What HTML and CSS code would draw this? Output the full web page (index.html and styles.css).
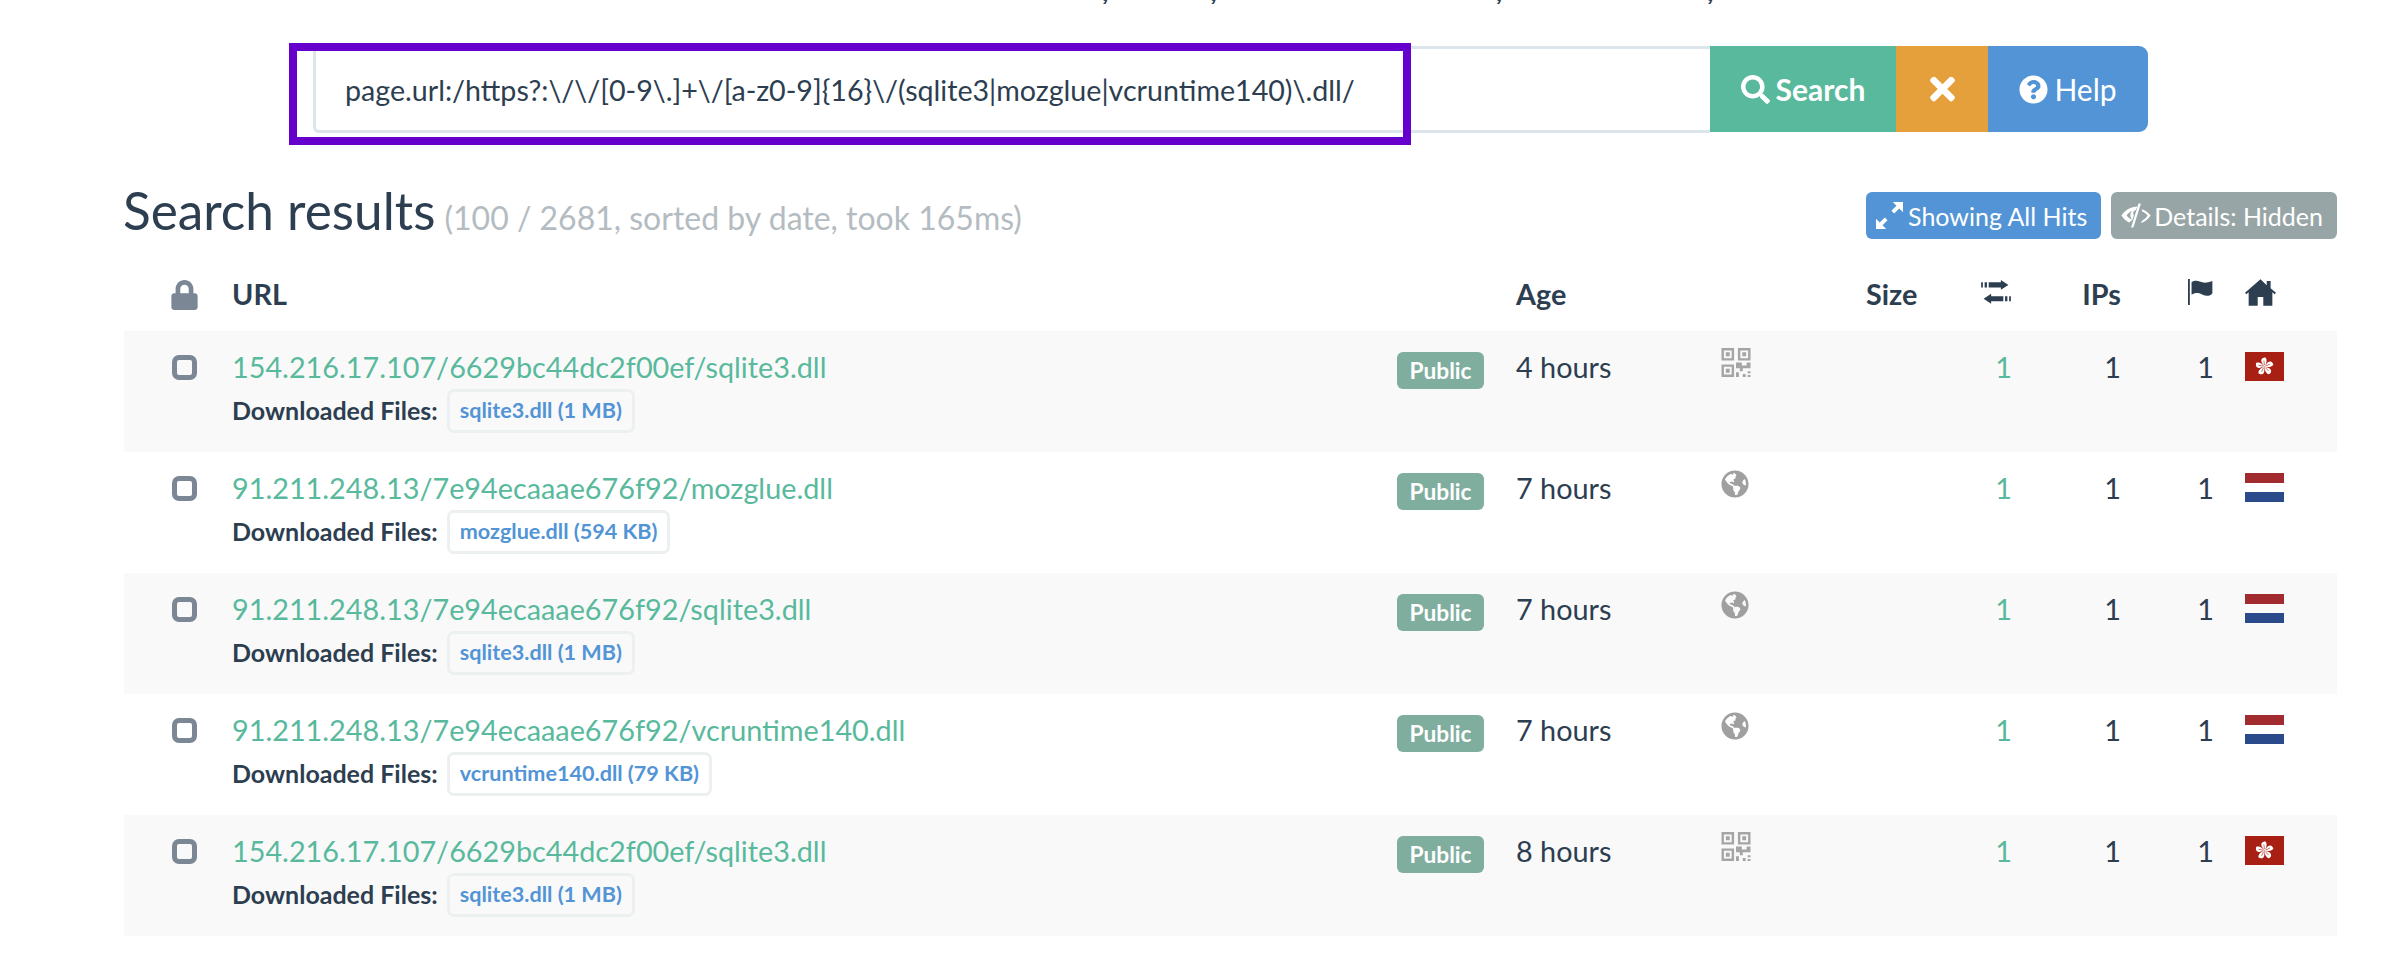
FILE: index.html
```html
<!DOCTYPE html>
<html lang="en">
<head>
<meta charset="utf-8">
<title>Search results</title>
<link rel="stylesheet" href="styles.css">
</head>
<body>
<svg class="defs" aria-hidden="true">
  <symbol id="i-search" viewBox="0 0 512 512"><path d="M505 442.7L405.3 343c-4.5-4.5-10.6-7-17-7H372c27.6-35.3 44-79.7 44-128C416 93.1 322.9 0 208 0S0 93.1 0 208s93.1 208 208 208c48.3 0 92.7-16.4 128-44v16.3c0 6.4 2.5 12.5 7 17l99.7 99.7c9.4 9.4 24.6 9.4 33.9 0l28.3-28.3c9.4-9.4 9.4-24.6.1-34zM208 336c-70.7 0-128-57.2-128-128 0-70.7 57.2-128 128-128 70.7 0 128 57.2 128 128 0 70.7-57.2 128-128 128z"/></symbol>
  <symbol id="i-times" viewBox="0 0 352 512"><path d="M242.72 256l100.07-100.07c12.28-12.28 12.28-32.19 0-44.48l-22.24-22.24c-12.28-12.28-32.19-12.28-44.48 0L176 189.28 75.93 89.21c-12.28-12.28-32.19-12.28-44.48 0L9.21 111.45c-12.28 12.28-12.28 32.19 0 44.48L109.28 256 9.21 356.07c-12.28 12.28-12.28 32.19 0 44.48l22.24 22.24c12.28 12.28 32.2 12.28 44.48 0L176 322.72l100.07 100.07c12.28 12.28 32.2 12.28 44.48 0l22.24-22.24c12.28-12.28 12.28-32.19 0-44.48L242.72 256z"/></symbol>
  <symbol id="i-help" viewBox="0 0 512 512"><path d="M504 256c0 136.997-111.043 248-248 248S8 392.997 8 256C8 119.083 119.043 8 256 8s248 111.083 248 248zM262.655 90c-54.497 0-89.255 22.957-116.549 63.758-3.536 5.286-2.353 12.415 2.715 16.258l34.699 26.31c5.205 3.947 12.621 3.008 16.665-2.122 17.864-22.658 30.113-35.797 57.303-35.797 20.429 0 45.698 13.148 45.698 32.958 0 14.976-12.363 22.667-32.534 33.976C247.128 238.528 216 254.941 216 296v4c0 6.627 5.373 12 12 12h56c6.627 0 12-5.373 12-12v-1.333c0-28.462 83.186-29.647 83.186-106.667 0-58.002-60.165-102-116.531-102zM256 338c-25.365 0-46 20.635-46 46 0 25.364 20.635 46 46 46s46-20.636 46-46c0-25.365-20.635-46-46-46z"/></symbol>
  <symbol id="i-expand" viewBox="0 0 448 448"><path d="M448 0v170l-62-62-84 84-46-46 84-84-62-62zM0 448V278l62 62 84-84 46 46-84 84 62 62z"/></symbol>
  <symbol id="i-eye" viewBox="0 0 640 512"><path fill-rule="evenodd" d="M352 66C210 66 90 140 10 256c36 58 92 116 166 150l70-60c-52-18-96-50-126-90 28-44 70-78 118-100-24 24-38 56-38 92 0 40 18 74 46 98l30-100c-14-14-18-34-14-54 6-24 26-42 50-46z"/><path d="M424 0l-50 0-160 512 50 0z"/><path d="M446 120c76 24 140 74 186 136-50 78-122 138-214 162l48-66c42-18 76-50 100-96-26-36-66-66-116-84z"/></symbol>
  <symbol id="i-lock" viewBox="0 0 448 512"><path d="M400 224h-24v-72C376 68.2 307.8 0 224 0S72 68.2 72 152v72H48c-26.5 0-48 21.5-48 48v192c0 26.5 21.5 48 48 48h352c26.5 0 48-21.5 48-48V272c0-26.5-21.5-48-48-48zm-104 0H152v-72c0-39.7 32.3-72 72-72s72 32.3 72 72v72z"/></symbol>
  <symbol id="i-exchange" viewBox="0 0 512 448"><path d="M340 40V0l130 85-130 85v-40H130V40zM60 40h40v90H60zM0 40h30v90H0zM172 278v-40L42 323l130 85v-40h210v-90zM412 278h40v90h-40zM482 278h30v90h-30z"/></symbol>
  <symbol id="i-flag" viewBox="0 0 512 512"><path d="M0 0h36v512H0zM70 60c60-34 110-30 160-10 70 28 130 36 250-10v240c-40 60-130 60-190 30-70-36-140-50-220 0z"/></symbol>
  <symbol id="i-home" viewBox="0 0 576 512"><path d="M288 20L0 272l24 26 44-38v252h168V350h104v162h168V260l44 38 24-26-100-88V50h-72v82z"/></symbol>
  <symbol id="i-qr" viewBox="0 0 30 30"><path fill-rule="evenodd" d="M0 0h13v13H0zM2.500 2.500v8h8v-8zM4.500 4.500h4v4h-4zM17 0h13v13H17zM19.500 2.500v8h8v-8zM21.500 4.500h4v4h-4zM0 17h13v13H0zM2.500 19.500v8h8v-8zM4.500 21.500h4v4h-4zM15 15h6v3h5v-3h4v6h-8v3h-3v-3h-4zM15 25h3v5h-3zM22 27h3v3h-3zM27 24h3v2h-3zM27 28h3v2h-3z"/></symbol>
  <symbol id="i-globe" viewBox="0 0 496 512"><path d="M248 8C111.03 8 0 119.03 0 256s111.03 248 248 248 248-111.03 248-248S384.97 8 248 8zm82.29 357.6c-3.9 3.88-7.99 7.95-11.31 11.28-2.99 3-5.1 6.7-6.17 10.71-1.51 5.66-2.73 11.38-4.77 16.87l-17.39 46.85c-13.76 3-28 4.69-42.65 4.69v-27.38c1.69-12.62-7.64-36.26-22.63-51.25-6-6-9.37-14.14-9.37-22.63v-32.01c0-11.64-6.27-22.34-16.46-27.97-14.37-7.95-34.81-19.06-48.81-26.11-11.48-5.78-22.1-13.14-31.65-21.75l-.8-.72a114.792 114.792 0 0 1-18.06-20.74c-9.38-13.77-24.66-36.42-34.59-51.14 20.47-45.5 57.36-82.04 103.2-101.89l24.01 12.01C203.48 89.74 216 82.01 216 70.11v-11.3c7.99-1.29 16.12-2.11 24.39-2.42l28.3 28.3c6.25 6.25 6.25 16.38 0 22.63L264 112l-10.34 10.34c-3.12 3.12-3.12 8.19 0 11.31l4.69 4.69c3.12 3.12 3.12 8.19 0 11.31l-8 8a8.008 8.008 0 0 1-5.66 2.34h-8.99c-2.08 0-4.08.81-5.58 2.27l-9.92 9.65a8.008 8.008 0 0 0-1.58 9.31l15.59 31.19c2.66 5.32-1.21 11.58-7.15 11.58h-5.64c-1.93 0-3.79-.7-5.24-1.96l-9.28-8.06a16.017 16.017 0 0 0-15.55-3.1l-31.17 10.39a11.95 11.95 0 0 0-8.17 11.34c0 4.53 2.56 8.66 6.61 10.69l11.08 5.54c9.41 4.71 19.79 7.16 30.31 7.16s22.59 27.29 32 32h66.75c8.49 0 16.62 3.37 22.63 9.37l13.69 13.69a30.503 30.503 0 0 1 8.93 21.57 46.536 46.536 0 0 1-13.72 32.98zM417 274.25c-5.79-1.45-10.84-5-14.15-9.97l-17.98-26.97a23.97 23.97 0 0 1 0-26.62l19.59-29.38c2.32-3.47 5.5-6.29 9.24-8.15l12.98-6.49C440.2 193.59 448 223.87 448 256c0 8.67-.74 17.16-1.82 25.54L417 274.25z"/></symbol>
  <symbol id="petal" viewBox="0 0 39 29" overflow="visible"><path fill="#fff" d="M19.500 14.500C18.500 12 15.500 10.500 16.500 7.500 17 6 19 5.500 20.500 5.500 22.500 8 21.500 12 19.500 14.500z"/><path fill="none" stroke="#a81f14" stroke-width=".6" d="M19.500 13L18.800 8.500"/></symbol>
  <symbol id="f-hk" viewBox="0 0 39 29"><rect width="39" height="29" fill="#a81f14"/><use href="#petal"/><use href="#petal" transform="rotate(72 19.500 14.500)"/><use href="#petal" transform="rotate(144 19.500 14.500)"/><use href="#petal" transform="rotate(216 19.500 14.500)"/><use href="#petal" transform="rotate(288 19.500 14.500)"/></symbol>
  <symbol id="f-nl" viewBox="0 0 39 29"><rect width="39" height="10" fill="#a22b2f"/><rect y="19" width="39" height="10" fill="#2b4a8c"/></symbol>
</svg>

<div class="clipped"><div class="commas"><span class="c1">,</span><span class="c2">,</span><span class="c3">,</span><span class="c4">,</span></div></div>

<form class="search">
  <div class="query">page.url:/https?:\/\/[0-9\.]+\/[a-z0-9]{16}\/(sqlite3|mozglue|vcruntime140)\.dll/</div>
  <button class="btn go" type="button"><svg class="ic"><use href="#i-search"/></svg>Search</button>
  <button class="btn clear" type="button"><svg class="ic"><use href="#i-times"/></svg></button>
  <button class="btn help" type="button"><svg class="ic"><use href="#i-help"/></svg>Help</button>
  <div class="highlight"></div>
</form>

<main class="results">
  <div class="head">
    <h2>Search results <small>(100 / 2681, sorted by date, took 165ms)</small></h2>
    <div class="tools">
      <span class="tool blue"><svg class="tic"><use href="#i-expand"/></svg>Showing All Hits</span>
      <span class="tool grey"><svg class="tic wide"><use href="#i-eye"/></svg>Details: Hidden</span>
    </div>
  </div>

  <table>
    <thead>
      <tr>
        <th class="c-check"><svg class="th-lock"><use href="#i-lock"/></svg></th>
        <th class="c-url">URL</th>
        <th class="c-vis"></th>
        <th class="c-age">Age</th>
        <th class="c-type"></th>
        <th class="c-size">Size</th>
        <th class="c-req"><svg class="th-ex"><use href="#i-exchange"/></svg></th>
        <th class="c-ips">IPs</th>
        <th class="c-cty"><svg class="th-flag"><use href="#i-flag"/></svg></th>
        <th class="c-home"><svg class="th-home"><use href="#i-home"/></svg></th>
      </tr>
    </thead>
    <tbody>
      <tr>
        <td><span class="box"></span></td>
        <td><a class="link">154.216.17.107/6629bc44dc2f00ef/sqlite3.dll</a><div class="files"><b>Downloaded Files:</b><span class="file">sqlite3.dll (1 MB)</span></div></td>
        <td><span class="pub">Public</span></td>
        <td>4 hours</td>
        <td><svg class="qr"><use href="#i-qr"/></svg></td>
        <td></td>
        <td class="num green">1</td>
        <td class="num">1</td>
        <td class="num">1</td>
        <td><svg class="flag"><use href="#f-hk"/></svg></td>
      </tr>
      <tr>
        <td><span class="box"></span></td>
        <td><a class="link">91.211.248.13/7e94ecaaae676f92/mozglue.dll</a><div class="files"><b>Downloaded Files:</b><span class="file">mozglue.dll (594 KB)</span></div></td>
        <td><span class="pub">Public</span></td>
        <td>7 hours</td>
        <td><svg class="globe"><use href="#i-globe"/></svg></td>
        <td></td>
        <td class="num green">1</td>
        <td class="num">1</td>
        <td class="num">1</td>
        <td><svg class="flag"><use href="#f-nl"/></svg></td>
      </tr>
      <tr>
        <td><span class="box"></span></td>
        <td><a class="link">91.211.248.13/7e94ecaaae676f92/sqlite3.dll</a><div class="files"><b>Downloaded Files:</b><span class="file">sqlite3.dll (1 MB)</span></div></td>
        <td><span class="pub">Public</span></td>
        <td>7 hours</td>
        <td><svg class="globe"><use href="#i-globe"/></svg></td>
        <td></td>
        <td class="num green">1</td>
        <td class="num">1</td>
        <td class="num">1</td>
        <td><svg class="flag"><use href="#f-nl"/></svg></td>
      </tr>
      <tr>
        <td><span class="box"></span></td>
        <td><a class="link">91.211.248.13/7e94ecaaae676f92/vcruntime140.dll</a><div class="files"><b>Downloaded Files:</b><span class="file">vcruntime140.dll (79 KB)</span></div></td>
        <td><span class="pub">Public</span></td>
        <td>7 hours</td>
        <td><svg class="globe"><use href="#i-globe"/></svg></td>
        <td></td>
        <td class="num green">1</td>
        <td class="num">1</td>
        <td class="num">1</td>
        <td><svg class="flag"><use href="#f-nl"/></svg></td>
      </tr>
      <tr>
        <td><span class="box"></span></td>
        <td><a class="link">154.216.17.107/6629bc44dc2f00ef/sqlite3.dll</a><div class="files"><b>Downloaded Files:</b><span class="file">sqlite3.dll (1 MB)</span></div></td>
        <td><span class="pub">Public</span></td>
        <td>8 hours</td>
        <td><svg class="qr"><use href="#i-qr"/></svg></td>
        <td></td>
        <td class="num green">1</td>
        <td class="num">1</td>
        <td class="num">1</td>
        <td><svg class="flag"><use href="#f-hk"/></svg></td>
      </tr>
    </tbody>
  </table>
</main>
</body>
</html>
```
FILE: styles.css
```css
* { box-sizing: border-box; }
html, body { margin: 0; padding: 0; }
body {
  height: 953px;
  overflow: hidden;
  background: #fff;
  color: #2c3e50;
  font-family: Lato, "Open Sans", sans-serif;
  font-size: 28.8px;
}
.defs { position: absolute; width: 0; height: 0; }

.clipped { height: 4px; overflow: hidden; }
.commas { display: flex; margin-top: -24px; line-height: 30px; font-size: 27px; font-weight: 700; }
.c1 { margin-left: 1102px; }
.c2 { margin-left: 102px; }
.c3 { margin-left: 279px; }
.c4 { margin-left: 205px; }

.search {
  position: relative;
  display: flex;
  height: 87px;
  margin: 42px 244px 0 313px;
}
.query {
  flex: 1;
  display: flex;
  align-items: center;
  padding-left: 29px;
  border: 3px solid #dce4ec;
  border-right: 0;
  border-radius: 6px 0 0 6px;
  font-size: 28.63px;
  white-space: nowrap;
}
.btn {
  display: flex;
  align-items: center;
  justify-content: center;
  gap: 6px;
  height: 86px;
  border: 0;
  padding: 0;
  color: #fff;
  font: 400 30px Lato, sans-serif;
}
.btn .ic { width: 29px; height: 29px; fill: #fff; }
.go { width: 186px; background: #59b99d; font-weight: 700; }
.clear { width: 92px; background: #e5a03b; }
.clear .ic { width: 25px; height: 36px; }
.help { width: 160px; background: #5294d6; border-radius: 0 9px 9px 0; }
.highlight {
  position: absolute;
  left: -24px;
  top: -3px;
  width: 1122px;
  height: 102px;
  border: 8px solid #6600cc;
  pointer-events: none;
}

.results { margin: 0 55px 0 124px; }
.head {
  display: flex;
  justify-content: space-between;
  align-items: flex-start;
  height: 86px;
  margin-top: 42px;
}
h2 {
  margin: 0 0 0 -1px;
  font-size: 51.3px;
  font-weight: 400;
  line-height: 70px;
}
h2 small { margin-left: -4px; font-size: 32px; color: #b4bcc2; }
.tools { display: flex; gap: 10px; margin-top: 17px; }
.tool {
  display: flex;
  align-items: center;
  height: 47px;
  border-radius: 6px;
  color: #fff;
  font-size: 25px;
}
.blue { gap: 5px; padding: 0 14px 0 10px; background: #5294d6; }
.grey { gap: 3px; padding: 0 14px 0 10px; background: #98a5a6; }
.tic { width: 27px; height: 27px; fill: #fff; }
.tic.wide { width: 30px; }

table { width: 100%; border-collapse: collapse; table-layout: fixed; }
th { height: 70px; padding: 0 0 4px; font-weight: 700; text-align: left; }
thead tr { height: 70px; }
tbody tr { height: 121px; }
tbody tr:nth-child(odd) { background: #f9f9f9; }
td { padding: 17px 0 0; vertical-align: top; line-height: 38px; }
.c-check { width: 108px; text-align: center; padding-left: 12px; }
.c-url { width: 1164px; }
.c-vis { width: 120px; }
.c-age { width: 205px; }
.c-type { width: 145px; }
.c-size { width: 65px; }
.c-req { width: 81px; text-align: right; }
.c-ips { width: 109px; text-align: right; }
.c-cty { width: 93px; text-align: right; }
.c-home { padding-left: 31px; }
td:first-child { text-align: center; padding-left: 12px; }
th svg { fill: #2c3e50; display: inline-block; vertical-align: middle; margin-bottom: 6px; }
.th-lock { width: 27px; height: 30px; margin-bottom: 3px; fill: #7b8794; }
.th-ex { width: 32px; height: 26px; }
.th-flag { width: 26px; height: 30px; }
.th-home { width: 31px; height: 30px; }

.box {
  display: inline-block;
  width: 25px;
  height: 25px;
  margin-top: 7px;
  border: 5px solid #7b8794;
  border-radius: 7px;
}
.link { color: #59b99d; }
.files { display: flex; align-items: center; margin-top: 3px; font-size: 25px; line-height: 1; }
.files b { font-weight: 700; }
.file {
  margin-left: 9px;
  padding: 8px 10px;
  border: 3px solid #ecf0f1;
  border-radius: 7px;
  color: #5294d6;
  font-size: 21.6px;
  font-weight: 700;
}
.pub {
  display: block;
  width: 87px;
  margin: 4px 0 0 1px;
  background: #7fae9f;
  border-radius: 6px;
  color: #fff;
  font-size: 22.7px;
  font-weight: 700;
  line-height: 37px;
  text-align: center;
}
.qr { display: block; width: 30px; height: 29px; fill: #a5a5a5; }
.globe { display: block; width: 28px; height: 28px; margin-top: 1px; fill: #a0a0a0; }
.num { text-align: right; }
.green { color: #59b99d; }
td:last-child { padding-left: 31px; }
.flag { display: block; width: 39px; height: 29px; margin-top: 4px; }
```
